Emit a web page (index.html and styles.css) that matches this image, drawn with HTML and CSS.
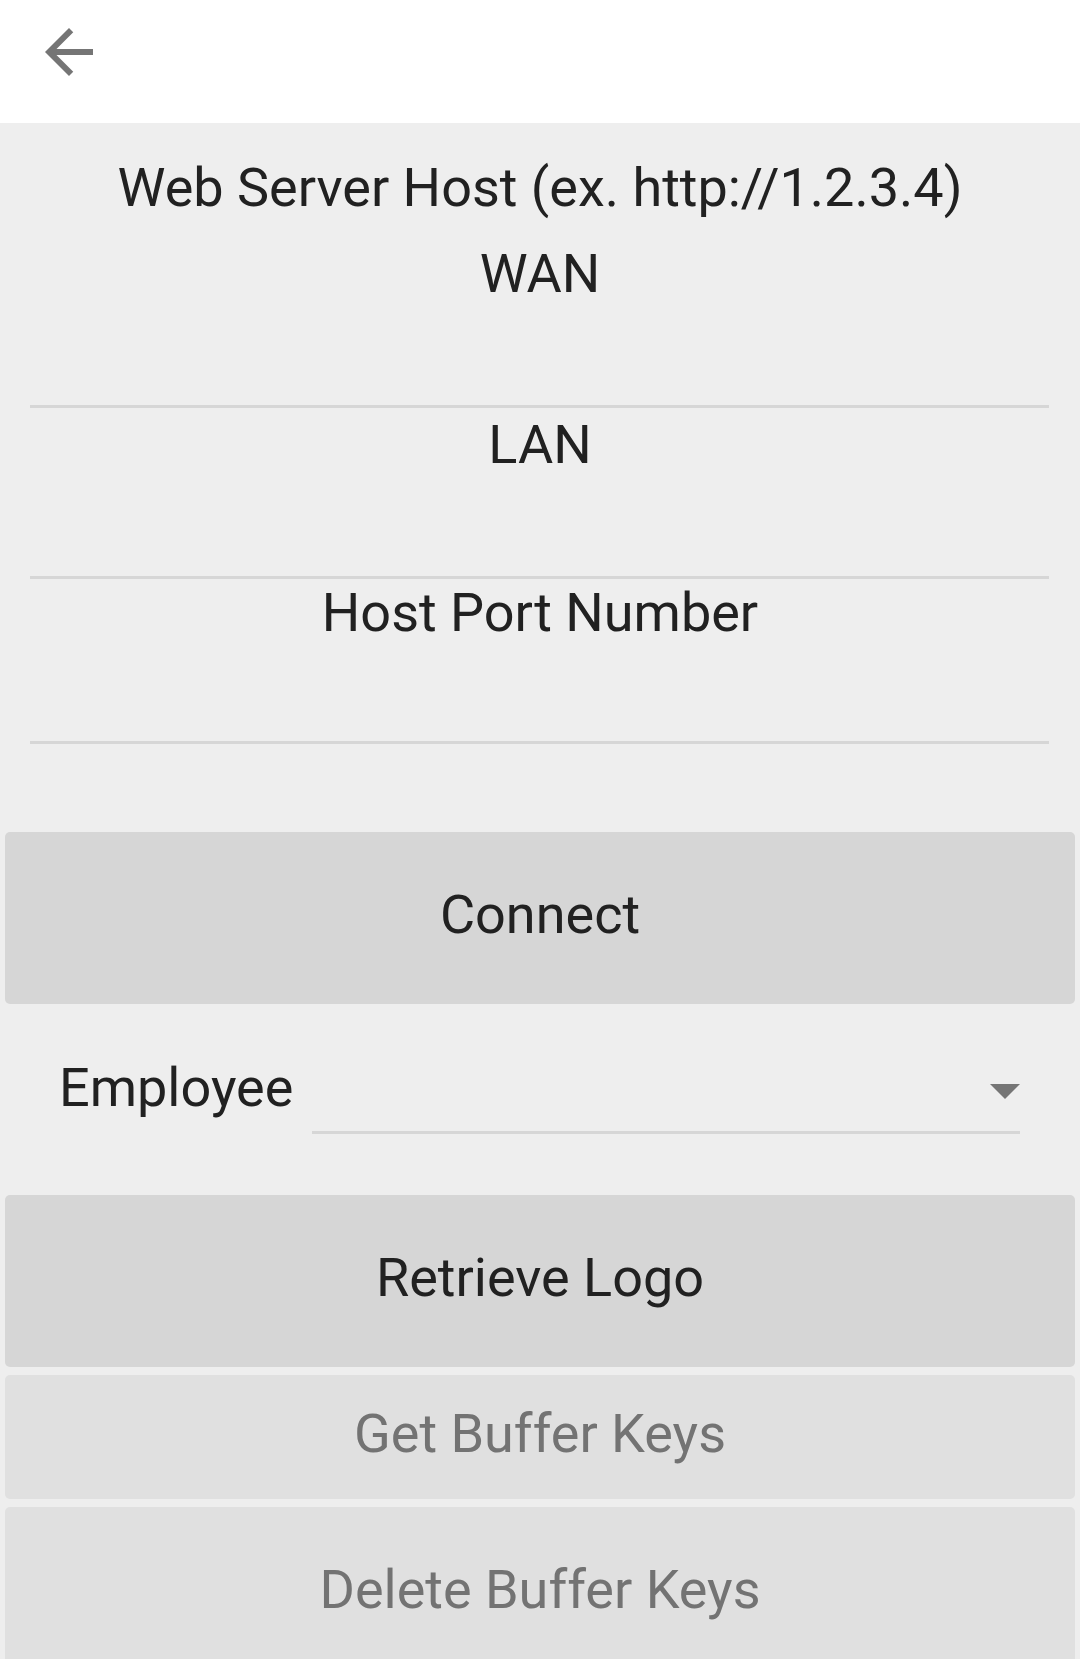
FILE: index.html
```html
<!DOCTYPE html>
<html lang="en">
<head>
<meta charset="utf-8">
<title>Settings</title>
<link rel="stylesheet" href="styles.css">
</head>
<body>
<header class="toolbar">
  <svg class="back-icon" viewBox="0 0 24 24" width="72" height="72" aria-label="Back">
    <path d="M20 11H7.83l5.59-5.59L12 4l-8 8 8 8 1.41-1.41L7.83 13H20v-2z" fill="#757575"/>
  </svg>
</header>
<main class="content">
  <div class="label title">Web Server Host (ex. http://1.2.3.4)</div>
  <div class="label label-wan">WAN</div>
  <div class="field"></div>
  <div class="label">LAN</div>
  <div class="field"></div>
  <div class="label label-port">Host Port Number</div>
  <div class="field field-port"></div>
  <div class="btn btn-connect">Connect</div>
  <div class="spinner-row">
    <div class="spinner-label">Employee</div>
    <div class="spinner"><span class="caret"></span></div>
  </div>
  <div class="btn btn-logo">Retrieve Logo</div>
  <div class="btn btn-small btn-disabled btn-gap">Get Buffer Keys</div>
  <div class="btn btn-disabled btn-gap">Delete Buffer Keys</div>
</main>
</body>
</html>
```

FILE: styles.css
```css
* { box-sizing: border-box; }
html, body {
  margin: 0;
  padding: 0;
  background: #eeeeee;
  font-family: Roboto, "Noto Sans", sans-serif;
  color: #212121;
  height: 1659px;
  overflow: hidden;
}
.toolbar {
  height: 123px;
  background: #ffffff;
  padding: 16px 0 0 33px;
}
.back-icon { display: block; }
.content {
  padding-top: 28px;
}
.label {
  font-size: 54px;
  line-height: 74px;
  height: 74px;
  text-align: center;
  white-space: nowrap;
}
.title { margin-bottom: 12px; }
.field {
  height: 97px;
  margin: 0 31px 0 30px;
  border-bottom: 3px solid #d6d6d6;
}
.label-port { margin-top: -3px; }
.field-port { height: 94px; }
.btn {
  height: 172px;
  margin: 0 5px;
  background: #d6d6d6;
  border-radius: 5px;
  display: flex;
  align-items: center;
  justify-content: center;
  padding-bottom: 6px;
  font-size: 54px;
  line-height: 64px;
  white-space: nowrap;
}
.btn-connect { margin-top: 88px; }
.spinner-row {
  display: flex;
  margin-top: 47px;
  padding-left: 59px;
  padding-right: 60px;
}
.spinner-label {
  flex: 0 0 253px;
  font-size: 54px;
  line-height: 74px;
  height: 74px;
  white-space: nowrap;
}
.spinner {
  flex: 1;
  height: 83px;
  border-bottom: 3px solid #d6d6d6;
  display: flex;
  align-items: center;
  justify-content: flex-end;
}
.caret {
  width: 0;
  height: 0;
  border-left: 15px solid transparent;
  border-right: 15px solid transparent;
  border-top: 15px solid #757575;
}
.btn-logo { margin-top: 61px; }
.btn-gap { margin-top: 8px; }
.btn-small { height: 124px; }
.btn-disabled {
  background: #e0e0e0;
  color: #737373;
}
```
